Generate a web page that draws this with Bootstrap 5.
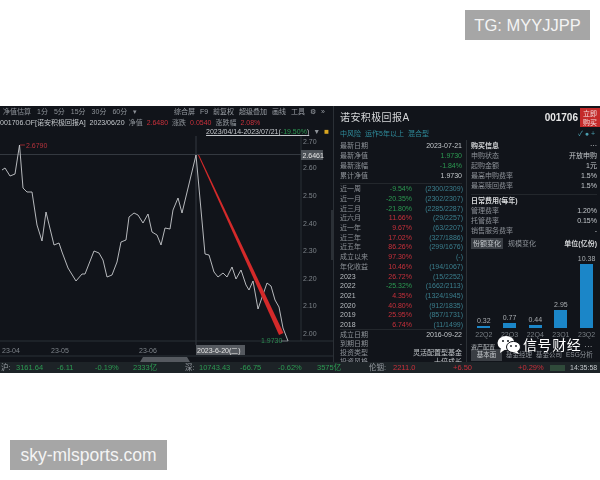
<!DOCTYPE html>
<html lang="zh-CN">
<head>
  <meta charset="UTF-8">
  <title>诺安积极回报A</title>
  <link href="https://cdn.jsdelivr.net/npm/bootstrap@5.3.3/dist/css/bootstrap.min.css" rel="stylesheet">
  <style>
    body {
      margin: 0;
      height: 480px;
      overflow: hidden;
      background: #fff;
      font-family: "Liberation Sans", "Noto Sans CJK SC", sans-serif;
    }
    .top-zone { height: 106px; padding: 10px 10px 0 0; }
    .wm-tag {
      height: 30px;
      background: #a6a6a6;
      color: #f4f4f4;
      font-size: 16.5px;
      line-height: 30px;
      text-align: center;
    }
    .wm-top { width: 125px; }
    .wm-bottom { width: 157px; margin: 67px 0 0 10px; font-size: 17.5px; }

    .terminal {
      height: 267px;
      background: #11141a;
      color: #8d9298;
      font-size: 7px;
      line-height: 1;
      filter: blur(.35px);
      overflow: hidden;
    }
    .term-main { height: 256px; }
    .chart-side { width: 334px; border-right: 1px solid #2b3036; }
    .info-side { width: 266px; }

    .tool-row { height: 11px; padding: 0 3px; align-items: center; }
    .fund-row { height: 10px; align-items: center; }
    .range-row { height: 9px; padding-right: 4px; align-items: center; }
    .tool-row span { margin-right: 6px; }
    .fund-row span { margin-right: 4px; }
    .tool-row .tool-right span { margin-right: 5px; }
    .tool-row .tool-right { color: #9a9fa5; }
    .fund-code { color: #c4c8cc; }
    .range-text { color: #c4c8cc; text-decoration: underline; }
    .red-txt { color: #c9303b; }
    .green-txt { color: #2c9a52; }
    .lock-mark { color: #d9a520; font-size: 8px; }
    .chart-svg { display: block; }
    .chart-svg text { font-family: "Liberation Sans", sans-serif; font-size: 7px; fill: #7d8389; }

    .title-row { height: 21px; padding-left: 6px; }
    .fund-name { color: #d5d7d9; font-size: 10px; letter-spacing: .4px; margin-top: 7px; }
    .fund-no { color: #e8e8e8; font-size: 10px; font-weight: 700; margin: 7px 2px 0 0; }
    .buy-btn {
      width: 20px;
      height: 19px;
      margin-top: 2px;
      background: #c42a2a;
      color: #f3dcdc;
      font-size: 7px;
      line-height: 9px;
      text-align: center;
      padding-top: 1px;
    }
    .meta-row { height: 13px; padding: 0 5px 0 6px; align-items: center; color: #2f8c9c; font-size: 7px; }
    .meta-row span { margin-right: 4px; }
    .meta-dots { color: #4a9fb0; }
    .stat-col { width: 133px; padding: 0 4px 0 6px; border-right: 1px solid #2b3036; height: 222px; overflow: hidden; }
    .buy-col { width: 133px; }
    .head-line {
      height: 10px;
      display: flex;
      justify-content: space-between;
      align-items: center;
      white-space: nowrap;
    }
    .stat-line {
      height: 9.7px;
      display: grid;
      grid-template-columns: 38px 34px 51px;
      align-items: center;
      white-space: nowrap;
    }
    .stat-line b { font-weight: 400; text-align: right; }
    .stat-line i { font-style: normal; text-align: right; color: #3b7f8e; }
    .year-line > span { color: #b9bdc1; }
    .val-hi { color: #c4c8cc; }
    .divide-a { height: 4px; border-bottom: 1px solid #23272c; }
    .divide-b { height: 1px; background: #23272c; }
    .foot-line { height: 9px; }
    .buy-rows { padding: 0 3px 0 4px; }
    .sec-title { color: #d5d7d9; font-weight: 700; }
    .cost-block { margin-top: 4px; border-top: 1px solid #23272c; }
    .tab-strip { height: 10px; margin-top: 3px; padding: 0 3px 0 4px; align-items: center; white-space: nowrap; }
    .tab-on { background: #3a3e44; color: #c4c8cc; padding: 2px; margin-right: 5px; }
    .unit-text { color: #d5d7d9; font-weight: 700; }
    .bar-zone { height: 92px; padding-left: 4px; }
    .bar-cell { width: 25.7px; flex: none; }
    .bar-val { color: #a9adb1; margin-bottom: 2px; }
    .bar-fill { width: 13px; background: #1b86c8; }
    .bar-lbl { height: 12px; line-height: 13px; color: #777d83; }
    .low-tabs { height: 12px; margin-top: 9px; padding-left: 4px; align-items: center; font-size: 6.5px; white-space: nowrap; }
    .low-tabs span { margin-right: 4px; }
    .low-tabs .tab-base { background: #3a3e44; color: #c4c8cc; width: 31px; line-height: 12px; text-align: center; }

    .sign-mark {
      position: absolute;
      left: 497px;
      top: 230px;
      color: #fff;
      font-size: 14px;
      line-height: 14px;
      letter-spacing: .6px;
    }
    .sign-mark svg { margin-right: 2px; }
    .sign-dots { font-size: 8px; margin-left: 3px; color: #ccc; }
    .asset-label { position: absolute; left: 471px; top: 238px; color: #b9bdc1; font-size: 6px; }

    .market-bar {
      height: 11px;
      background: #1d2327;
      font-size: 7.5px;
      display: grid;
      grid-template-columns: 16px 41px 38px 38px 51px 15px 41px 38px 39px 51px 25px 60px 65px 32px 20px 30px;
      align-items: center;
      white-space: nowrap;
    }
    .market-bar .mkt-lbl { color: #9a9fa5; padding-left: 1px; }
    .mkt-block { width: 15px; height: 6px; background: #2f4a3a; }
    .mkt-time { color: #c4c8cc; font-size: 7px; }
  </style>
</head>
<body>
<div class="top-zone d-flex justify-content-end">
  <div class="wm-tag wm-top">TG: MYYJJPP</div>
</div>

<div class="terminal position-relative">
  <div class="term-main d-flex">
    <div class="chart-side">
      <div class="tool-row d-flex justify-content-between">
        <div class="d-flex">
          <span>净值估算</span><span>1分</span><span>5分</span><span>15分</span><span>30分</span><span>60分</span><span>▾</span>
        </div>
        <div class="d-flex tool-right">
          <span>综合屏</span><span>F9</span><span>前复权</span><span>超级叠加</span><span>画线</span><span>工具</span><span>⚙</span><span>»</span>
        </div>
      </div>
      <div class="fund-row d-flex">
        <span class="fund-code">001706.OF[诺安积极回报A]</span>
        <span class="fund-code">2023/06/20</span>
        <span>净值</span><span class="red-txt">2.6480</span>
        <span>涨跌</span><span class="red-txt">0.0540</span>
        <span>涨跌幅</span><span class="red-txt">2.08%</span>
      </div>
      <div class="range-row d-flex justify-content-end gap-1">
        <span class="range-text">2023/04/14-2023/07/21(<span class="green-txt">-19.50%</span>)</span>
        <span>▼</span><span class="lock-mark">■</span>
      </div>
      <svg class="chart-svg" width="333" height="226" viewBox="0 136 333 226">
        <line x1="0" y1="154.5" x2="301" y2="154.5" stroke="#343940"/>
        <line x1="196" y1="136" x2="196" y2="345" stroke="#343940"/>
        <line x1="301" y1="136" x2="301" y2="341" stroke="#2b3036"/>
        <line x1="0" y1="341" x2="333" y2="341" stroke="#2b3036"/>
        <line x1="0" y1="356" x2="333" y2="356" stroke="#2b3036"/>
        <polyline fill="none" stroke="#c8cbce" stroke-width=".9" stroke-linejoin="round" points="2,170 5,168 10,176 15,174 19.5,145 23,188 27,192 32,192 37,225 42,241 46,212 54,245 59,243 62,252 68,268 76,281 82,274 85,274 94,251 99,253 103,260 107,277 112,275 117,262 121,242 126,240 129,217 134,213 138,215 143,223 148,214 152,232 157,235 161,245 165,228 170,229 173,210 178,198 182,213 196,155 205,254 209,255 214,272 218,277 223,273 227,277 232,267 236,279 241,270 246,285 249,290 253,281 258,309 267,283 271,286 275,300 279,307 283,328 288,341"/>
        <polygon fill="#d42a2a" points="198,155 199,155 283.5,333 279,335"/>
        <polyline fill="none" stroke="#c9303b" stroke-width=".7" points="20,145 25,145"/>
        <text x="26" y="147.5" style="fill:#b5333c">2.6790</text>
        <text x="261" y="343" style="fill:#2c8a52">1.9730</text>
        <line x1="281" y1="341" x2="288" y2="341" stroke="#8d9298" stroke-width=".7"/>
        <text x="303" y="143.5">2.70</text>
        <text x="303" y="169.5">2.60</text>
        <text x="303" y="197.5">2.50</text>
        <text x="303" y="225.5">2.40</text>
        <text x="303" y="252.5">2.30</text>
        <text x="303" y="280.5">2.20</text>
        <text x="303" y="307.5">2.10</text>
        <text x="303" y="335.5">2.00</text>
        <rect x="301" y="150" width="22" height="10" fill="#4c5157"/>
        <text x="302.5" y="157.5" style="fill:#e4e4e4">2.6461</text>
        <text x="2" y="353">23-04</text>
        <text x="51" y="353">23-05</text>
        <text x="139" y="353">23-06</text>
        <rect x="196" y="345" width="49" height="10" fill="#55595f"/>
        <text x="197" y="352.5" style="fill:#e4e4e4">2023-6-20(二)</text>
        <polygon fill="#55595f" points="143,357 187,357 190,362 140,362"/>
        <rect x="331" y="210" width="2" height="50" fill="#2b3036"/>
      </svg>
    </div>

    <div class="info-side">
      <div class="title-row d-flex justify-content-between">
        <div class="fund-name">诺安积极回报A</div>
        <div class="d-flex">
          <div class="fund-no">001706</div>
          <div class="buy-btn">立即<br>购买</div>
        </div>
      </div>
      <div class="meta-row d-flex justify-content-between">
        <div><span>中风险</span><span>运作5年以上</span><span>混合型</span></div>
        <div class="meta-dots">✓ ● +</div>
      </div>
      <div class="d-flex">
        <div class="stat-col">
          <div class="head-line"><span>最新日期</span><span class="val-hi">2023-07-21</span></div>
          <div class="head-line"><span>最新净值</span><span class="green-txt">1.9730</span></div>
          <div class="head-line"><span>最新涨幅</span><span class="green-txt">-1.84%</span></div>
          <div class="head-line"><span>累计净值</span><span class="val-hi">1.9730</span></div>
          <div class="divide-a"></div>
          <div id="statRows"></div>
          <div class="divide-b"></div>
          <div class="head-line foot-line"><span>成立日期</span><span class="val-hi">2016-09-22</span></div>
          <div class="head-line foot-line"><span>到期日期</span><span>-</span></div>
          <div class="head-line foot-line"><span>投资类型</span><span class="val-hi">灵活配置型基金</span></div>
          <div class="head-line foot-line"><span>投资风格</span><span class="val-hi">十倍成长</span></div>
        </div>
        <div class="buy-col">
          <div class="buy-rows">
            <div class="head-line"><span class="sec-title">购买信息</span><span class="val-hi">···</span></div>
            <div class="head-line"><span>申购状态</span><span class="val-hi">开放申购</span></div>
            <div class="head-line"><span>起购金额</span><span class="val-hi">1元</span></div>
            <div class="head-line"><span>最高申购费率</span><span class="val-hi">1.5%</span></div>
            <div class="head-line"><span>最高赎回费率</span><span class="val-hi">1.5%</span></div>
            <div class="cost-block">
              <div class="head-line"><span class="sec-title">日常费用(每年)</span></div>
              <div class="head-line"><span>管理费率</span><span class="val-hi">1.20%</span></div>
              <div class="head-line"><span>托管费率</span><span class="val-hi">0.15%</span></div>
              <div class="head-line"><span>销售服务费率</span><span class="val-hi">-</span></div>
            </div>
          </div>
          <div class="tab-strip d-flex">
            <span class="tab-on">份额变化</span><span>规模变化</span>
            <span class="unit-text ms-auto">单位(亿份)</span>
          </div>
          <div class="bar-zone d-flex align-items-end" id="barZone"></div>
          <div class="low-tabs d-flex">
            <span class="tab-base">基本面</span><span>基金经理</span><span>基金公司</span><span>ESG分析</span>
          </div>
        </div>
      </div>
    </div>
  </div>

  <div class="market-bar">
    <span class="mkt-lbl">沪:</span>
    <span class="green-txt">3161.64</span><span class="green-txt">-6.11</span><span class="green-txt">-0.19%</span><span class="green-txt">2333亿</span>
    <span class="mkt-lbl">深:</span>
    <span class="green-txt">10743.43</span><span class="green-txt">-66.75</span><span class="green-txt">-0.62%</span><span class="green-txt">3575亿</span>
    <span class="mkt-lbl">伦铟:</span>
    <span class="red-txt">2211.0</span><span class="red-txt">+6.50</span><span class="red-txt">+0.29%</span>
    <span class="mkt-block"></span>
    <span class="mkt-time">14:35:58</span>
  </div>

  <div class="asset-label">资产配置</div>
  <div class="sign-mark d-flex align-items-center">
    <svg width="24" height="18" viewBox="0 0 24 18">
      <ellipse cx="9" cy="7" rx="8.5" ry="7" fill="#fff"/>
      <polygon points="4,12 3,17 9,13" fill="#fff"/>
      <ellipse cx="16.5" cy="11" rx="7" ry="5.6" fill="#fff" stroke="#11141a" stroke-width="1"/>
      <polygon points="20,15 22,18 16,16" fill="#fff"/>
      <circle cx="6" cy="5" r="1" fill="#11141a"/>
      <circle cx="11" cy="5" r="1" fill="#11141a"/>
      <circle cx="14" cy="10" r=".9" fill="#11141a"/>
      <circle cx="19" cy="10" r=".9" fill="#11141a"/>
    </svg>
    <span>信号财经</span><span class="sign-dots">...</span>
  </div>
</div>

<div class="wm-tag wm-bottom">sky-mlsports.com</div>

<script>
  // 收益与排名
  const stats = [
    ["近一周", "-9.54%", "(2300/2309)"], ["近一月", "-20.35%", "(2302/2307)"],
    ["近三月", "-21.80%", "(2285/2287)"], ["近六月", "11.66%", "(29/2257)"],
    ["近一年", "9.67%", "(63/2207)"], ["近三年", "17.02%", "(327/1886)"],
    ["近五年", "86.26%", "(299/1676)"], ["成立以来", "97.30%", "(-)"],
    ["年化收益", "10.46%", "(194/1067)"], ["2023", "26.72%", "(15/2252)"],
    ["2022", "-25.32%", "(1662/2113)"], ["2021", "4.35%", "(1324/1945)"],
    ["2020", "40.80%", "(912/1835)"], ["2019", "25.95%", "(857/1731)"],
    ["2018", "6.74%", "(11/1499)"]
  ];
  document.getElementById("statRows").innerHTML = stats.map(([nome, pct, rank]) => {
    const cor = pct.startsWith("-") ? "green-txt" : "red-txt";
    const ano = /^\d+$/.test(nome) ? " year-line" : "";
    return `<div class="stat-line${ano}"><span>${nome}</span><b class="${cor}">${pct}</b><i>${rank}</i></div>`;
  }).join("");

  // 份额柱状图
  const barras = [["22Q2", "0.32", 2], ["22Q3", "0.77", 5], ["22Q4", "0.44", 3], ["23Q1", "2.95", 18], ["23Q2", "10.38", 64]];
  document.getElementById("barZone").innerHTML = barras.map(([tri, valor, h]) => `
    <div class="bar-cell d-flex flex-column align-items-center">
      <div class="bar-val">${valor}</div>
      <div class="bar-fill" style="height:${h}px"></div>
      <div class="bar-lbl">${tri}</div>
    </div>`).join("");
</script>
<script src="https://cdn.jsdelivr.net/npm/bootstrap@5.3.3/dist/js/bootstrap.bundle.min.js"></script>
</body>
</html>
